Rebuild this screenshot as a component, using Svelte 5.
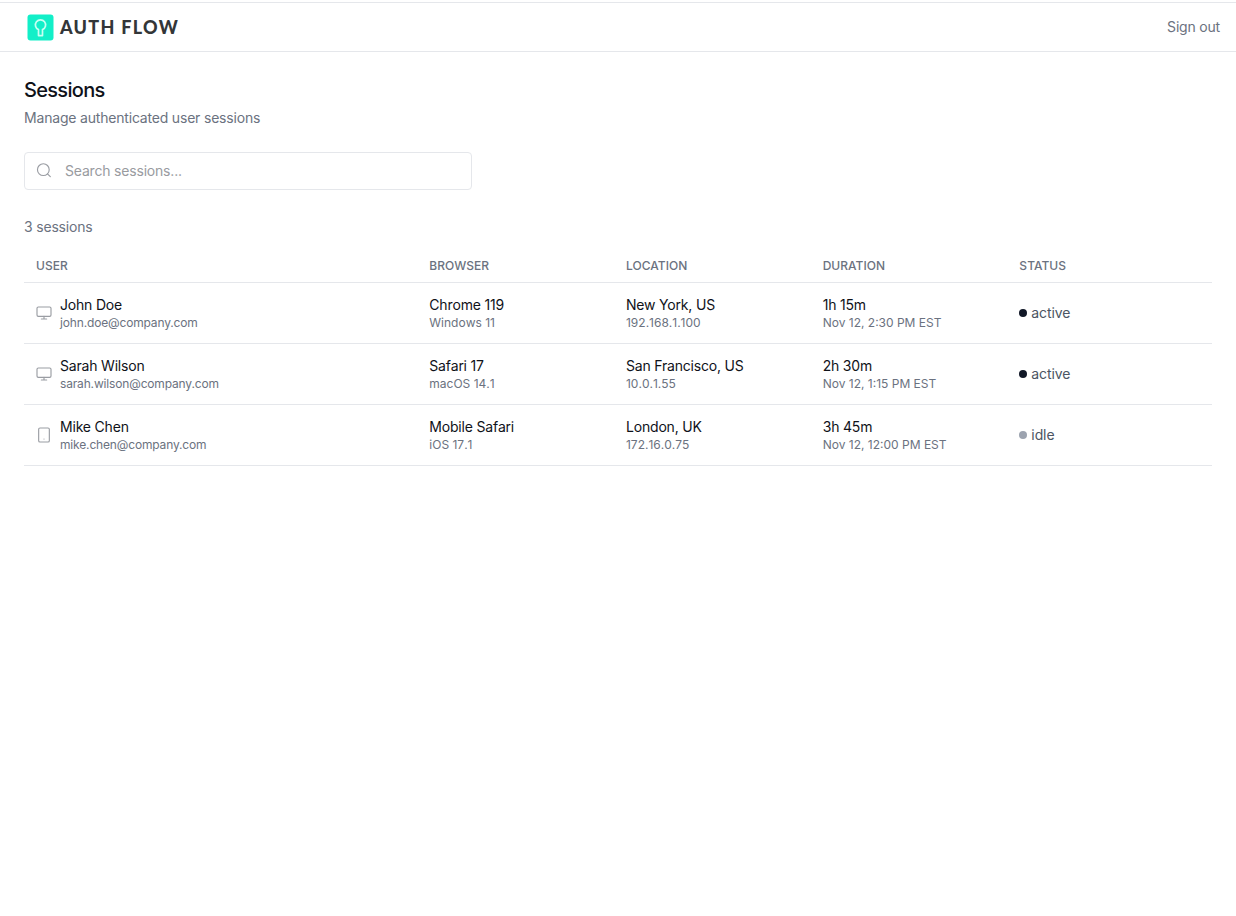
<script>
  const sessions = [
    { id: 1, name: 'John Doe', email: 'john.doe@company.com', device: 'desktop', browser: 'Chrome 119', os: 'Windows 11', location: 'New York, US', ip: '192.168.1.100', duration: '1h 15m', started: 'Nov 12, 2:30 PM EST', status: 'active' },
    { id: 2, name: 'Sarah Wilson', email: 'sarah.wilson@company.com', device: 'desktop', browser: 'Safari 17', os: 'macOS 14.1', location: 'San Francisco, US', ip: '10.0.1.55', duration: '2h 30m', started: 'Nov 12, 1:15 PM EST', status: 'active' },
    { id: 3, name: 'Mike Chen', email: 'mike.chen@company.com', device: 'mobile', browser: 'Mobile Safari', os: 'iOS 17.1', location: 'London, UK', ip: '172.16.0.75', duration: '3h 45m', started: 'Nov 12, 12:00 PM EST', status: 'idle' }
  ];

  let query = $state('');

  const filtered = $derived(
    sessions.filter((s) =>
      [s.name, s.email, s.browser, s.location].join(' ').toLowerCase().includes(query.toLowerCase())
    )
  );
</script>

<header class="topbar">
  <div class="brand">
    <svg class="logo" viewBox="0 0 27 27" fill="none">
      <rect x="0.5" y="0.5" width="26" height="26" rx="3" fill="#12efc8" />
      <path
        d="M11.5 15.6a5.1 5.1 0 1 1 4 0v6h-4z"
        stroke="#c8fff2"
        stroke-width="1.7"
        stroke-linejoin="round"
      />
    </svg>
    <span class="brand-name">AUTH FLOW</span>
  </div>
  <button class="sign-out">Sign out</button>
</header>

<main>
  <h1>Sessions</h1>
  <p class="subtitle">Manage authenticated user sessions</p>

  <div class="search">
    <svg class="icon" viewBox="0 0 24 24">
      <circle cx="11" cy="10" r="8.8" />
      <path d="m21.5 20.5-4.3-4.3" />
    </svg>
    <input type="text" placeholder="Search sessions..." bind:value={query} />
  </div>

  <p class="count">{filtered.length} sessions</p>

  <table>
    <thead>
      <tr>
        <th class="col-user">User</th>
        <th>Browser</th>
        <th>Location</th>
        <th>Duration</th>
        <th class="col-status">Status</th>
      </tr>
    </thead>
    <tbody>
      {#each filtered as s (s.id)}
        <tr>
          <td>
            <div class="user">
              {#if s.device === 'desktop'}
                <svg class="icon" viewBox="0 0 24 24">
                  <rect x="1.5" y="3" width="21" height="14" rx="2" />
                  <path d="M8 21h8M12 17v4" />
                </svg>
              {:else}
                <svg class="icon" viewBox="0 0 24 24">
                  <rect x="4" y="1.5" width="16" height="21" rx="2" />
                  <path d="M12 18h.01" />
                </svg>
              {/if}
              <div>
                <div class="primary">{s.name}</div>
                <div class="secondary email">{s.email}</div>
              </div>
            </div>
          </td>
          <td>
            <div class="primary version">{s.browser}</div>
            <div class="secondary version">{s.os}</div>
          </td>
          <td>
            <div class="primary">{s.location}</div>
            <div class="secondary version">{s.ip}</div>
          </td>
          <td>
            <div class="primary">{s.duration}</div>
            <div class="secondary">{s.started}</div>
          </td>
          <td>
            <div class="status">
              <span class="dot" class:idle={s.status === 'idle'}></span>
              {s.status}
            </div>
          </td>
        </tr>
      {/each}
    </tbody>
  </table>
</main>

<style>
  :global(body) {
    background: #fff;
    font-family: Inter, 'Liberation Sans', sans-serif;
    font-size: 14px;
    line-height: 20px;
    letter-spacing: -0.19px;
    color: #0f1219;
  }

  .topbar {
    display: flex;
    align-items: center;
    justify-content: space-between;
    box-sizing: border-box;
    height: 50px;
    margin-top: 2px;
    padding: 0 16px 0 27px;
    border-top: 1px solid #e5e7eb;
    border-bottom: 1px solid #e5e7eb;
  }

  .brand {
    display: flex;
    align-items: center;
    gap: 6px;
  }

  .logo {
    width: 27px;
    height: 27px;
  }

  .brand-name {
    font-family: Lato, sans-serif;
    font-size: 18px;
    font-weight: 900;
    letter-spacing: 1.3px;
    color: #333638;
  }

  .sign-out {
    padding: 0;
    border: none;
    background: none;
    font: inherit;
    letter-spacing: inherit;
    color: #6b7280;
    cursor: pointer;
  }

  main {
    padding: 24px;
  }

  h1 {
    margin: 0;
    font-size: 20px;
    font-weight: 500;
    line-height: 28px;
    letter-spacing: -0.7px;
  }

  .subtitle {
    margin: 4px 0 24px;
    color: #6b7280;
  }

  .search {
    display: flex;
    align-items: center;
    gap: 13px;
    box-sizing: border-box;
    width: 448px;
    height: 38px;
    padding: 0 12px 0 11px;
    border: 1px solid #e5e7eb;
    border-radius: 4px;
  }

  .search input {
    flex: 1;
    padding: 0;
    border: none;
    outline: none;
    background: transparent;
    font: inherit;
    letter-spacing: inherit;
    color: inherit;
  }

  .search input::placeholder {
    color: #999b9f;
  }

  .icon {
    flex-shrink: 0;
    width: 16px;
    height: 16px;
    fill: none;
    stroke: #9a9da3;
    stroke-width: 1.7;
    stroke-linecap: round;
    stroke-linejoin: round;
  }

  .count {
    margin: 27px 0 12px;
    color: #6b7280;
  }

  table {
    width: 100%;
    table-layout: fixed;
    border-collapse: separate;
    border-spacing: 0;
  }

  th {
    width: 196.7px;
    box-sizing: border-box;
    height: 34px;
    padding: 0 12px;
    border-bottom: 1px solid #e5e7eb;
    text-align: left;
    font-size: 12px;
    font-weight: 500;
    line-height: 16px;
    text-transform: uppercase;
    letter-spacing: 0.04px;
    color: #6b7280;
  }

  .col-user {
    width: 393.3px;
  }

  .col-status {
    width: auto;
  }

  td {
    padding: 12px;
    border-bottom: 1px solid #e5e7eb;
    vertical-align: middle;
  }

  .user {
    display: flex;
    align-items: center;
    gap: 8px;
  }

  .secondary {
    font-size: 12px;
    line-height: 16px;
    letter-spacing: 0;
    color: #6b7280;
  }

  .email {
    letter-spacing: -0.16px;
  }

  .version {
    font-kerning: none;
  }

  .status {
    display: flex;
    align-items: center;
    gap: 4px;
    letter-spacing: -0.1px;
    color: #4b5563;
  }

  .dot {
    width: 8px;
    height: 8px;
    border-radius: 50%;
    background: #111827;
  }

  .dot.idle {
    background: #9ca3af;
  }
</style>
